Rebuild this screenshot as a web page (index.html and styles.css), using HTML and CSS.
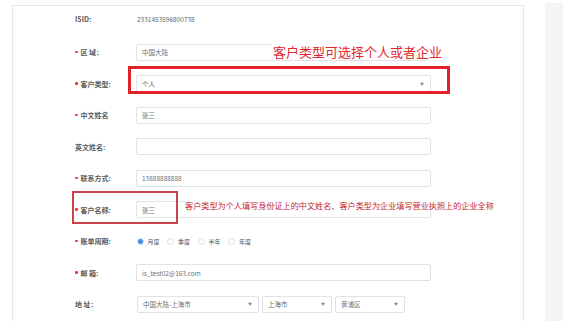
FILE: index.html
```html
<!DOCTYPE html>
<html>
<head>
    <meta charset="utf-8">
    <title>客户信息</title>
    <link rel="stylesheet" href="styles.css">
</head>
<body>
    <div class="page">
        <div class="card">
            <div class="row first">
                <div class="label">ISID:</div>
                <div class="text">2331453596800738</div>
            </div>
            <div class="row">
                <div class="label"><span class="req"></span>区 域：</div>
                <div class="field">中国大陆</div>
            </div>
            <div class="row">
                <div class="label"><span class="req"></span>客户类型:</div>
                <div class="field select">个人<span class="arrow">▼</span></div>
            </div>
            <div class="row">
                <div class="label"><span class="req"></span>中文姓名</div>
                <div class="field">张三</div>
            </div>
            <div class="row">
                <div class="label">英文姓名:</div>
                <div class="field"></div>
            </div>
            <div class="row">
                <div class="label"><span class="req"></span>联系方式:</div>
                <div class="field">13888888888</div>
            </div>
            <div class="row">
                <div class="label"><span class="req"></span>客户名称:</div>
                <div class="field">张三</div>
            </div>
            <div class="row">
                <div class="label"><span class="req"></span>账单周期:</div>
                <div class="radios">
                    <span class="radio"><span class="dot on"></span>月度</span>
                    <span class="radio"><span class="dot"></span>季度</span>
                    <span class="radio"><span class="dot"></span>半年</span>
                    <span class="radio"><span class="dot"></span>年度</span>
                </div>
            </div>
            <div class="row">
                <div class="label"><span class="req"></span>邮 箱:</div>
                <div class="field">is_test02@163.com</div>
            </div>
            <div class="row">
                <div class="label">地 址：</div>
                <div class="address">
                    <div class="field select wide">中国大陆-上海市<span class="arrow">▼</span></div>
                    <div class="field select small">上海市<span class="arrow">▼</span></div>
                    <div class="field select small">黄浦区<span class="arrow">▼</span></div>
                </div>
            </div>

            <!-- 标注 -->
            <div class="mark mark-type"></div>
            <div class="note note-type">客户类型可选择个人或者企业</div>
            <div class="mark mark-name"></div>
            <div class="note note-name">客户类型为个人填写身份证上的中文姓名、客户类型为企业填写营业执照上的企业全称</div>
        </div>
        <div class="side"></div>
    </div>
</body>
</html>
```

FILE: styles.css
```css
/* trang */
body {
    margin: 0;
    background: #fff;
    font-family: "Noto Sans CJK SC", "Noto Sans", sans-serif;
}

.page {
    display: flex;
    align-items: stretch;
    height: 321px;
    overflow: hidden;
}

.card {
    position: relative;
    box-sizing: border-box;
    width: 512px;
    margin: 5px 0 0 12px;
    padding: 4.5px 0 0 62px;
    border: 1px solid #e6e6e6;
    border-bottom: none;
}

.side {
    width: 18px;
    margin: 3px 0 0 21px;
    background: #f4f4f4;
}

/* form */
.row {
    display: flex;
    align-items: center;
    height: 17px;
    margin-bottom: 14.5px;
}

.row.first {
    margin-bottom: 16px;
}

.label {
    display: flex;
    align-items: center;
    width: 61px;
    font-size: 7px;
    font-weight: 600;
    color: #5a5a5a;
    white-space: pre;
}

.req {
    width: 2.5px;
    height: 2.5px;
    margin-right: 3px;
    border-radius: 50%;
    background: #e33;
}

.text {
    font-size: 6.5px;
    color: #666;
    padding-left: 1px;
}

.field {
    display: flex;
    align-items: center;
    box-sizing: border-box;
    width: 295px;
    height: 17px;
    padding: 0 6px 0 5px;
    border: 1px solid #e2e2e2;
    border-radius: 2px;
    font-size: 6.5px;
    color: #707070;
}

.select .arrow {
    margin-left: auto;
    font-size: 4px;
    color: #888;
}

.address {
    display: flex;
    gap: 3px;
    padding-left: 1px;
}

.field.wide {
    width: 122px;
}

.field.small {
    width: 70px;
}

.radios {
    display: flex;
    padding-left: 0.5px;
}

.radio {
    display: flex;
    align-items: center;
    margin-right: 7.5px;
    font-size: 6px;
    color: #555;
}

.dot {
    box-sizing: border-box;
    width: 7px;
    height: 7px;
    margin-right: 4px;
    border: 1px solid #ddd;
    border-radius: 50%;
}

.dot.on {
    border: 1.5px solid #dbe9fb;
    background: #3b8de0;
}

/* chu thich */
.mark {
    position: absolute;
    box-sizing: border-box;
}

.mark-type {
    left: 115px;
    top: 60px;
    width: 322px;
    height: 28px;
    border: 3px solid #e4202a;
}

.mark-name {
    left: 59px;
    top: 185px;
    width: 106px;
    height: 33px;
    border: 2px solid #c9444a;
}

.note {
    position: absolute;
    background: #fff;
    white-space: nowrap;
}

.note-type {
    left: 259px;
    top: 38px;
    padding: 0 1px;
    font-size: 13px;
    line-height: 16px;
    color: #e2262e;
}

.note-name {
    left: 172px;
    top: 193.5px;
    font-size: 8.15px;
    line-height: 11px;
    color: #c4262e;
}
```
